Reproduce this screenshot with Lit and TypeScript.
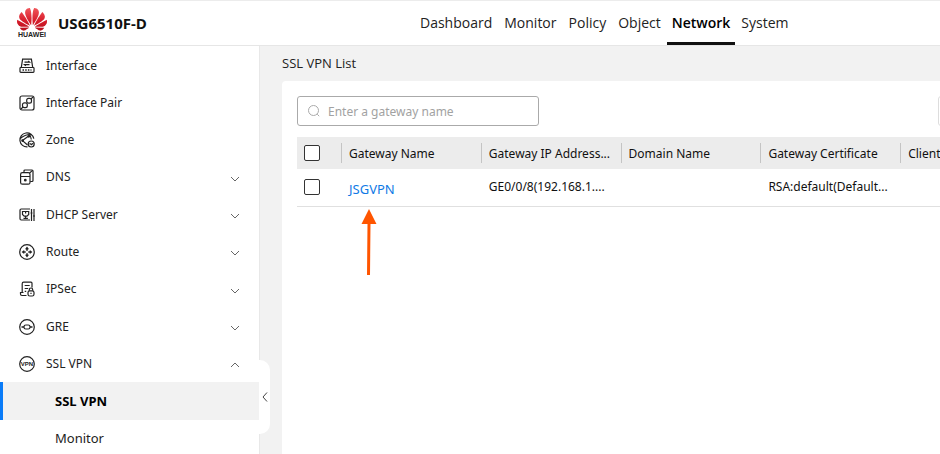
import { LitElement, html, css, svg, nothing } from "lit";
import { customElement, property, state } from "lit/decorators.js";
import { classMap } from "lit/directives/class-map.js";

const icons: Record<string, unknown> = {
  interface: svg`<path d="M3.600 1.200h8.800l1.300 8.300H2.300z"/><rect x="1" y="9.500" width="14" height="4.800" rx=".8"/><path d="M5.500 4.200h5l-1.300-1.200M10.500 6.700h-5l1.300 1.200"/><path stroke-width="1.600" d="M3.500 12h1.500M6.200 12h1.500M8.900 12h1.500M11.500 12h1"/>`,
  pair: svg`<rect x="1" y="1" width="14" height="14" rx="2"/><rect x="7.700" y="3.400" width="4.800" height="4.800" rx="1.900"/><rect x="3.500" y="7.800" width="4.800" height="4.800" rx="1.900"/><path d="M11.800 4.200l2.200-2.200M4.200 11.800L2 14"/>`,
  zone: svg`<path d="M14.800 6.700A7 7 0 1 0 8.500 14.900M1.200 6.500C5 3.500 9 2.200 12 2.600M3.500 8.600L8.500 13M9.500 2C11.500 3.700 12.200 5.500 12.300 7.500"/><circle cx="3.600" cy="8.600" r=".8" fill="currentColor"/><circle cx="9.800" cy="4.300" r=".8" fill="currentColor"/><path d="M3.500 8.600L9.300 4.200"/><circle cx="12.200" cy="12" r="3"/><path d="M10.300 11.800h1.400l.6.900 1.900-1.500"/>`,
  dns: svg`<path d="M5 3.600V2q0-1 1-1h7q1 0 1 1v9.500q0 1-1 1h-1.800"/><rect x="1.600" y="3.600" width="9.400" height="11.600" rx="1.800"/><path d="M1.600 7.500H11M10.600 4l3-2.600"/><circle cx="6.300" cy="11.200" r=".8" fill="currentColor"/>`,
  dhcp: svg`<path d="M11 2H2.200Q1 2 1 3.200v8.600Q1 13 2.200 13H11M3.500 4.500h6.200v3L8 9.200H5.200L3.500 7.500zM6.600 5v1.500M6.600 9.200v2M4.500 11.300h4.400"/><path d="M12.500 2v12M15 2v12M11.500 6h2M14 9h2"/>`,
  route: svg`<circle cx="8" cy="8" r="7.300"/><path fill="currentColor" stroke="none" d="M8 2.600l2 2.600H8.800v1.500H7.200V5.200H6zM8 13.400l2-2.600H8.800V9.300H7.200v1.500H6zM2.600 8l2.600-2v1.200h1.500v1.600H5.200V10zM13.400 8l-2.600-2v1.200H9.300v1.600h1.500V10z"/>`,
  ipsec: svg`<path d="M7.500 14.500H3q-1.500 0-1.500-1.500v-1.500h3M3.200 11.500V2.700q0-1.500 1.500-1.500h7.300q1 0 1 1v4.300M5.700 4.500h5M5.700 7.500h3.500M5.700 10.300h1.500"/><rect x="9" y="9.800" width="6" height="5.200" rx="1.800"/><path d="M10.300 9.800V8.700a1.700 1.700 0 0 1 3.400 0v1.100M12 11.700v1.400"/>`,
  gre: svg`<circle cx="8" cy="8" r="7.300"/><rect x="5" y="6" width="6" height="4" rx="1.800"/><path stroke-width="1.500" d="M2.500 8H5M11 8h2.500"/>`,
  vpn: svg`<circle cx="8" cy="8" r="7.300"/><text x="8" y="10" text-anchor="middle" class="vpn">VPN</text>`,
};

interface Item {
  icon: string;
  label: string;
  group?: boolean;
  children?: string[];
}

const items: Item[] = [
  { icon: "interface", label: "Interface" },
  { icon: "pair", label: "Interface Pair" },
  { icon: "zone", label: "Zone" },
  { icon: "dns", label: "DNS", group: true },
  { icon: "dhcp", label: "DHCP Server", group: true },
  { icon: "route", label: "Route", group: true },
  { icon: "ipsec", label: "IPSec", group: true },
  { icon: "gre", label: "GRE", group: true },
  { icon: "vpn", label: "SSL VPN", group: true, children: ["SSL VPN", "Monitor"] },
];

const font = css`"Segoe UI", "Noto Sans", sans-serif`;
const displayFont = css`"Segoe UI", "Open Sans", sans-serif`;

@customElement("top-bar")
class TopBar extends LitElement {
  @property() active = "Network";
  static styles = css`
    :host { display: block; }
    header {
      display: flex; box-sizing: border-box; height: 46px;
      border-top: 1px solid #ececec; border-bottom: 1px solid #e6e6e6; background: #fff;
      font-family: ${displayFont};
    }
    .brand { display: flex; align-items: center; flex: 0 0 414px; padding-left: 16px; box-sizing: border-box; gap: 10px; }
    .logo { display: flex; flex-direction: column; align-items: center; width: 32px; }
    .logo svg { width: 30px; height: 23px; }
    .mark { font: bold 7px/8px "Liberation Sans", sans-serif; color: #222; }
    .model { font-size: 15px; font-weight: 700; color: #111; white-space: nowrap; }
    nav { display: flex; }
    a {
      display: flex; align-items: center; padding: 2px 6px 0; box-sizing: border-box;
      font-size: 14px; color: #222; text-decoration: none; border-bottom: 3px solid transparent;
    }
    .active { font-weight: 600; color: #000; border-color: #111; padding: 2px 5px 0; }
  `;
  render() {
    const petals = svg`<path d="M3.67 6.14S1.82 7.91 1.72 9.78v.35c.08 1.51 1.22 2.4 1.22 2.4 1.83 1.79 6.26 4.04 7.3 4.55 0 0 .06.03.1-.01l.02-.04v-.04C7.52 10.8 3.67 6.14 3.67 6.14zM9.65 18.6c-.02-.08-.1-.08-.1-.08l-7.38.26c.8 1.43 2.15 2.53 3.56 2.2.96-.25 3.16-1.78 3.88-2.3.06-.05.04-.09.04-.09zm.08-.78C6.49 15.63.21 12.28.21 12.28c-.15.46-.2.9-.21 1.3v.07c0 1.07.4 1.82.4 1.82.8 1.69 2.34 2.2 2.34 2.2.7.3 1.4.31 1.4.31.12.02 4.4 0 5.54 0 .05 0 .08-.05.08-.05v-.06c0-.03-.03-.05-.03-.05zM9.06 3.19a3.42 3.42 0 0 0-2.57 3.15v.41c.03.6.16 1.05.16 1.05.66 2.9 3.86 7.65 4.55 8.65.05.05.1.03.1.03a.1.1 0 0 0 .06-.1c1.06-10.6-1.11-13.42-1.11-13.42-.32.02-1.19.23-1.19.23z"/>`;
    return html`<header>
      <div class="brand">
        <div class="logo">
          <svg viewBox="0 3 24 18.200" aria-hidden="true">
            <defs><linearGradient id="red" gradientUnits="userSpaceOnUse" x1="0" y1="3" x2="0" y2="21"><stop offset="0" stop-color="#f0555a"/><stop offset=".55" stop-color="#d81e2c"/><stop offset="1" stop-color="#b80f1d"/></linearGradient></defs>
            <g fill="url(#red)">${petals}<g transform="translate(24 0) scale(-1 1)">${petals}</g></g>
          </svg>
          <span class="mark">HUAWEI</span>
        </div>
        <span class="model">USG6510F-D</span>
      </div>
      <nav>
        ${["Dashboard", "Monitor", "Policy", "Object", "Network", "System"].map(
          (t) => html`<a href="#" class=${classMap({ active: t === this.active })}>${t}</a>`
        )}
      </nav>
    </header>`;
  }
}

@customElement("side-menu")
class SideMenu extends LitElement {
  static styles = css`
    :host { display: block; font: 12px/18px ${font}; color: #222; }
    nav { display: grid; grid-auto-rows: 1fr; min-height: 410px; padding-top: 1px; }
    a, button {
      display: flex; align-items: center; box-sizing: border-box; width: 100%;
      padding: 0 19px; gap: 11px; border: 0; background: none;
      font: inherit; color: inherit; text-decoration: none; text-align: left;
    }
    .icon { width: 16px; height: 16px; flex: none; fill: none; stroke: currentColor; stroke-width: 1.2; overflow: visible; }
    .vpn { font: bold 6px "Liberation Sans", sans-serif; fill: currentColor; stroke: none; }
    .chevron { width: 10px; height: 6px; margin: 3px 0 0 auto; fill: none; stroke: #666; }
    .sub { padding-left: 55px; font-size: 13px; }
    .current { background: #f2f2f2; color: #000; font-weight: 700; border-left: 3px solid #0a7cf8; padding-left: 52px; }
  `;
  render() {
    return html`<nav>
      ${items.map((i) => {
        const icon = html`<svg class="icon" viewBox="0 0 16 16" aria-hidden="true">${icons[i.icon]}</svg>`;
        if (!i.group) return html`<a href="#">${icon}<span>${i.label}</span></a>`;
        return html`<button type="button" aria-expanded=${i.children ? "true" : "false"}>
            ${icon}<span>${i.label}</span>
            <svg class="chevron" viewBox="0 0 10 6" aria-hidden="true">
              <path d=${i.children ? "M1 5l4-4 4 4" : "M1 1l4 4 4-4"} />
            </svg>
          </button>
          ${i.children
            ? i.children.map((c, n) => html`<a href="#" class=${classMap({ sub: true, current: n === 0 })}>${c}</a>`)
            : nothing}`;
      })}
    </nav>`;
  }
}

@customElement("gateway-table")
class GatewayTable extends LitElement {
  @state() private columns = ["Gateway Name", "Gateway IP Address...", "Domain Name", "Gateway Certificate", "Client"];
  static styles = css`
    :host { display: block; font: 12px/18px ${font}; color: #111; }
    .toolbar { display: flex; height: 30px; margin-bottom: 11px; }
    .search {
      display: flex; align-items: center; box-sizing: border-box; width: 242px; height: 30px;
      border: 1px solid #aaa; border-radius: 3px; padding: 0 9px; gap: 7px;
    }
    .search svg { width: 14px; height: 14px; flex: none; fill: none; stroke: #aaa; }
    .search input { flex: 1; min-width: 0; border: 0; padding: 2px 0 0; outline: 0; background: none; font: inherit; color: #222; }
    .search input::placeholder { color: #a2a2a2; opacity: 1; }
    .more { flex: none; width: 80px; margin: 0 -78px 0 auto; border: 1px solid #ddd; border-radius: 3px; background: #fff; }
    table { table-layout: fixed; width: 743px; border-collapse: collapse; }
    .pick { width: 44px; }
    th, td { padding: 0; text-align: left; font-weight: 400; white-space: nowrap; }
    th { height: 32px; background: #ececec; }
    td { height: 37px; box-sizing: border-box; border-bottom: 1px solid #e0e0e0; padding-left: 8px; }
    th span { display: block; border-left: 1px solid #c4c4c4; padding: 2px 0 0 7px; }
    th:first-child, td:first-child { padding-left: 7px; }
    .box {
      appearance: none; display: block; box-sizing: border-box; width: 16px; height: 16px; margin: 0;
      border: 1px solid #333; border-radius: 2px; background: #fff;
    }
    .name { position: relative; padding-top: 3px; font-size: 13px; }
    .name a { color: #0f7ae5; text-decoration: none; }
    .arrow { position: absolute; left: 20px; top: 40px; width: 16px; height: 66px; }
  `;
  render() {
    return html`
      <div class="toolbar">
        <label class="search">
          <svg viewBox="0 0 14 14" aria-hidden="true"><circle cx="6.500" cy="6.500" r="5"/><path d="M10.200 10.200l2 2"/></svg>
          <input type="text" placeholder="Enter a gateway name" aria-label="Gateway name" />
        </label>
        <button class="more" type="button" aria-label="More"></button>
      </div>
      <table>
        <colgroup><col class="pick" />${this.columns.map(() => html`<col />`)}</colgroup>
        <thead><tr>
          <th><input class="box" type="checkbox" aria-label="Select all" /></th>
          ${this.columns.map((c) => html`<th scope="col"><span>${c}</span></th>`)}
        </tr></thead>
        <tbody><tr>
          <td><input class="box" type="checkbox" aria-label="Select JSGVPN" /></td>
          <td class="name"><a href="#">JSGVPN</a>
            <svg class="arrow" viewBox="0 0 16 66" aria-hidden="true"><path fill="#ff5500" d="M8 0l7.500 15h-6L9 66H6L6.500 15H.500z"/></svg>
          </td>
          <td>GE0/0/8(192.168.1....</td>
          <td></td>
          <td>RSA:default(Default...</td>
          <td></td>
        </tr></tbody>
      </table>`;
  }
}

@customElement("app-root")
class AppRoot extends LitElement {
  static styles = css`
    :host { display: flex; flex-direction: column; height: 100vh; overflow: hidden; background: #f2f2f2; font: 13px/18px ${displayFont}; }
    .body { display: flex; flex: 1; min-height: 0; }
    aside { position: relative; flex: 0 0 259px; background: #fff; border-right: 1px solid #e8e8e8; }
    .fold {
      position: absolute; left: 100%; top: 314px; width: 11px; height: 74px; padding: 0;
      display: flex; align-items: center; justify-content: center;
      border: 0; border-radius: 0 10px 10px 0; background: #fff;
    }
    .fold svg { width: 8px; height: 12px; flex: none; fill: none; stroke: #444; }
    main { display: flex; flex-direction: column; flex: 1; min-width: 0; padding-left: 22px; }
    h1 { margin: 0; padding: 8px 0 9px; font-size: 13px; line-height: 18px; font-weight: 400; color: #222; }
    .panel { flex: 1; overflow: hidden; background: #fff; border-radius: 4px 0 0 0; padding: 15px 0 0 15px; }
  `;
  render() {
    return html`
      <top-bar></top-bar>
      <div class="body">
        <aside>
          <side-menu></side-menu>
          <button class="fold" type="button" aria-label="Collapse menu">
            <svg viewBox="0 0 8 12" aria-hidden="true"><path d="M6 1.500L2 6l4 4.500"/></svg>
          </button>
        </aside>
        <main>
          <h1>SSL VPN List</h1>
          <section class="panel"><gateway-table></gateway-table></section>
        </main>
      </div>`;
  }
}
